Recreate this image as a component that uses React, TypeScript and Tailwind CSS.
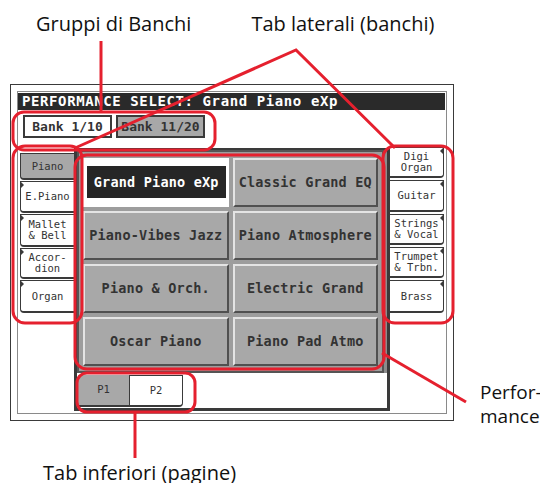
const PERFS = [
  'Grand Piano eXp',
  'Classic Grand EQ',
  'Piano-Vibes Jazz',
  'Piano Atmosphere',
  'Piano & Orch.',
  'Electric Grand',
  'Oscar Piano',
  'Piano Pad Atmo',
];

const LEFT_TABS = [
  { label: ['Piano'], h: 'h-[27px]', active: true },
  { label: ['E.Piano'], h: 'h-[32px]' },
  { label: ['Mallet', '& Bell'], h: 'h-[33px]' },
  { label: ['Accor-', 'dion'], h: 'h-[31px]' },
  { label: ['Organ'], h: 'h-[33px]' },
];

const RIGHT_TABS = [
  { label: ['Digi', 'Organ'], h: 'h-[31px]' },
  { label: ['Guitar'], h: 'h-[32px]' },
  { label: ['Strings', '& Vocal'], h: 'h-[31px]' },
  { label: ['Trumpet', '& Trbn.'], h: 'h-[31px]' },
  { label: ['Brass'], h: 'h-[33px]' },
];

const mono = "font-['DejaVu_Sans_Mono',monospace]";

function SideTab({ label, h, active, side }: { label: string[]; h: string; active?: boolean; side: 'left' | 'right' }) {
  return (
    <div
      className={`${h} relative flex flex-col items-center justify-center border border-[#3a3a3a] border-b-2 ${
        side === 'left' ? 'rounded-bl-[4px] border-r-0' : 'rounded-br-[4px] border-l-0'
      } ${active ? 'bg-[#a8a8a8]' : 'bg-white'} ${mono} text-[10.5px] leading-[11px] text-[#333]`}
    >
      {label.map(l => (
        <span key={l}>{l}</span>
      ))}
      {!active && (
        <span
          className={`absolute top-[-1px] w-0 h-0 border-t-[4px] border-b-[4px] border-t-transparent border-b-transparent ${
            side === 'left' ? 'left-[-1px] border-l-[4px] border-l-[#3a3a3a]' : 'right-[-1px] border-r-[4px] border-r-[#3a3a3a]'
          }`}
        />
      )}
    </div>
  );
}

export default function App() {
  return (
    <div className="relative w-[540px] h-[483px] overflow-hidden bg-white font-['Open_Sans',sans-serif] text-[#111]">
      {/* Etichette in alto */}
      <div className="flex pt-[11px] text-[20px] leading-[25px] whitespace-nowrap">
        <span className="ml-[36px]">Gruppi di Banchi</span>
        <span className="ml-[60px]">Tab laterali (banchi)</span>
      </div>

      <div className="flex mt-[48px]">
        {/* Schermo */}
        <div className="ml-[10px] w-[444px] h-[337px] shrink-0 border border-[#3a3a3a] p-[6px]">
          <div className="h-full border border-[#8a8a8a] flex flex-col">
            <div className={`h-[17px] mt-[1px] mr-[1px] bg-[#2a2a2a] text-white pl-[4px] ${mono} font-bold text-[14px] leading-[17px] tracking-[0.6px] whitespace-nowrap`}>
              PERFORMANCE SELECT: Grand Piano eXp
            </div>

            {/* Gruppi banchi */}
            <div className={`flex gap-[4px] mt-[5px] pl-[5px] ${mono} font-bold text-[13px]`}>
              <div className="w-[89px] h-[23px] flex items-center justify-center bg-white border-2 border-[#3a3a3a] text-[#333]">
                Bank 1/10
              </div>
              <div className="w-[89px] h-[23px] flex items-center justify-center bg-[#a8a8a8] border-2 border-[#3a3a3a] text-[#333]">
                Bank 11/20
              </div>
            </div>

            <div className="flex mt-[9px] flex-1">
              {/* Tab sinistra */}
              <div className="w-[56px] pl-[2px] pt-[6px] flex flex-col gap-[1px]">
                {LEFT_TABS.map(t => (
                  <SideTab key={t.label[0]} {...t} side="left" />
                ))}
              </div>

              {/* Area centrale */}
              <div className="w-[316px] h-[263px] mt-[1px] border-l-[3px] border-r-[3px] border-t-2 border-b-[3px] border-[#3a3a3a] bg-[#8c8c8c] flex flex-col">
                <div className="mr-[3px] border-2 border-[#555] bg-[#9d9d9d] pt-[6px] pb-[5px] px-[4px]">
                  <div className="grid grid-cols-2 gap-[4px]">
                    {PERFS.map((p, i) =>
                      i === 0 ? (
                        <div key={p} className="h-[49px] bg-white px-[4px] pt-[8px] pb-[9px] pr-[3px]">
                          <div className={`h-full bg-[#262626] text-white flex items-center justify-center ${mono} font-bold text-[13.5px] tracking-[0.2px]`}>
                            {p}
                          </div>
                        </div>
                      ) : (
                        <div
                          key={p}
                          className={`h-[49px] flex items-center justify-center bg-[#a8a8a8] border-2 border-t-[#e4e4e4] border-l-[#e4e4e4] border-b-[#505050] border-r-[#505050] text-[#333] ${mono} font-bold text-[13.5px] tracking-[0.2px] whitespace-nowrap`}
                        >
                          {p}
                        </div>
                      )
                    )}
                  </div>
                </div>
                {/* Tab pagine */}
                <div className={`flex-1 bg-white flex pl-[1px] pt-[2px] ${mono} text-[10.5px] text-[#333]`}>
                  <div className="w-[51px] h-[32px] flex items-center justify-center bg-[#a8a8a8] border-b-2 border-[#3a3a3a]">P1</div>
                  <div className="w-[54px] h-[32px] flex items-center justify-center bg-white border border-b-2 border-[#3a3a3a] rounded-br-[4px]">
                    P2
                  </div>
                </div>
              </div>

              {/* Tab destra */}
              <div className="w-[54px] flex flex-col gap-[2px]">
                {RIGHT_TABS.map(t => (
                  <SideTab key={t.label[0]} {...t} side="right" />
                ))}
              </div>
            </div>
          </div>
        </div>

        <div className="ml-[26px] mt-[296px] text-[19px] leading-[24px] whitespace-nowrap">
          <div>Perfor-</div>
          <div>mance</div>
        </div>
      </div>

      <div className="ml-[43px] mt-[32px] text-[20px] leading-[25px] whitespace-nowrap">Tab inferiori (pagine)</div>

      {/* Richiami rossi */}
      <svg className="absolute inset-0 pointer-events-none" width="540" height="483" viewBox="0 0 540 483" fill="none" stroke="#e5202e" strokeWidth="3">
        <line x1="101" y1="41" x2="101" y2="112" />
        <rect x="13" y="112" width="202" height="38" rx="11" />
        <polyline points="75,148 296,50 395,148" strokeLinejoin="miter" />
        <rect x="13" y="146" width="69" height="177" rx="12" />
        <rect x="383" y="146" width="70" height="177" rx="12" />
        <rect x="75" y="155" width="309" height="214" rx="12" />
        <rect x="77" y="373" width="118" height="39" rx="10" />
        <line x1="135" y1="412" x2="135" y2="458" />
        <line x1="382" y1="353" x2="466" y2="402" />
      </svg>
    </div>
  );
}
